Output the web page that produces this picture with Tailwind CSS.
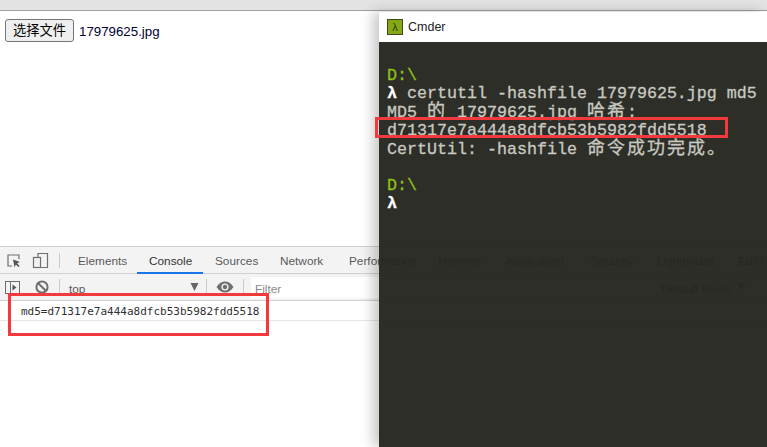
<!DOCTYPE html>
<html lang="zh">
<head>
    <meta charset="UTF-8">
    <title>md5</title>
    <script src="https://cdn.jsdelivr.net/npm/@tailwindcss/browser@4"></script>
</head>
<body class="bg-white">
<div class="relative w-[767px] h-[447px] overflow-hidden bg-white flex flex-col font-['Liberation_Sans','Noto_Sans_CJK_SC',sans-serif]">
    <!-- browser top edge -->
    <div class="h-[11px] shrink-0 bg-[#e3e3e3] border-b border-[#a0a0a0]"></div>

    <!-- page -->
    <div class="h-[235px] shrink-0 pl-[5px] pt-[8px] flex items-start">
        <button class="h-[23px] w-[69px] bg-[#efefef] border border-[#767676] rounded-[3px] text-[13.3px] text-black leading-none">选择文件</button>
        <span class="ml-[5px] mt-[4px] text-[13.3px] leading-[17px] text-[#000033]">17979625.jpg</span>
    </div>

    <!-- devtools -->
    <div class="flex-1 border-t border-[#d0d0d0] flex flex-col">
        <div class="h-[27px] shrink-0 bg-[#f3f3f3] border-b border-[#d0d0d0] flex items-center text-[11.8px] text-[#5a5a5a] whitespace-nowrap relative">
            <svg class="absolute left-[6px] top-[6px]" width="16" height="16" viewBox="0 0 16 16" fill="none"><path d="M6 13H2V2h11v4" stroke="#6e6e6e" stroke-width="1.2"/><path d="M7 6.5l7 2.6-3 1.2 2.6 2.6-1.2 1.2-2.6-2.6-1.2 3z" fill="#555"/></svg>
            <svg class="absolute left-[32px] top-[5px]" width="17" height="17" viewBox="0 0 17 17" fill="none"><path d="M6 5V1.5h9.5v14H9" stroke="#6e6e6e" stroke-width="1.2"/><rect x="1.5" y="5.5" width="7" height="10" stroke="#6e6e6e" stroke-width="1.2"/></svg>
            <div class="absolute left-[59px] top-[6px] h-[15px] w-px bg-[#ccc]"></div>
            <span class="absolute left-[78px] top-[6px]">Elements</span>
            <span class="absolute left-[149px] top-[6px] text-[#333]">Console</span>
            <div class="absolute left-[137px] bottom-[-1px] w-[66px] h-[2px] bg-[#1a73e8]"></div>
            <span class="absolute left-[215px] top-[6px]">Sources</span>
            <span class="absolute left-[280px] top-[6px]">Network</span>
            <span class="absolute left-[349px] top-[6px]">Performance</span>
            <span class="absolute left-[438px] top-[6px]">Memory</span>
            <span class="absolute left-[506px] top-[6px]">Application</span>
            <span class="absolute left-[591px] top-[6px]">Security</span>
            <span class="absolute left-[657px] top-[6px]">Lighthouse</span>
            <span class="absolute left-[738px] top-[6px]">EditThisCookie</span>
        </div>
        <div class="h-[27px] shrink-0 bg-[#f3f3f3] border-b border-[#d0d0d0] flex items-center text-[11.8px] text-[#5a5a5a] whitespace-nowrap relative">
            <svg class="absolute left-[5px] top-[6px]" width="15" height="15" viewBox="0 0 15 15" fill="none"><rect x="0.5" y="1.5" width="14" height="12" stroke="#6e6e6e"/><path d="M5.5 1.5v12" stroke="#6e6e6e"/><path d="M7.5 4.5l4 3-4 3z" fill="#555"/></svg>
            <svg class="absolute left-[35px] top-[6px]" width="14" height="14" viewBox="0 0 14 14" fill="none"><circle cx="7" cy="7" r="5.6" stroke="#6e6e6e" stroke-width="2"/><path d="M3 3l8 8" stroke="#6e6e6e" stroke-width="2"/></svg>
            <div class="absolute left-[59px] top-[5px] h-[16px] w-px bg-[#ccc]"></div>
            <span class="absolute left-[69px] top-[7px]">top</span>
            <svg class="absolute left-[190px] top-[9px]" width="9" height="8" viewBox="0 0 9 8"><path d="M0.5 0h8L4.500 8z" fill="#666"/></svg>
            <div class="absolute left-[206px] top-[5px] h-[16px] w-px bg-[#ccc]"></div>
            <svg class="absolute left-[216px] top-[7px]" width="18" height="12" viewBox="0 0 18 12"><path d="M0.500 6C3 2 6 0.500 9 0.500S15 2 17.500 6C15 10 12 11.500 9 11.500S3 10 0.500 6z" fill="#6e6e6e"/><circle cx="9" cy="6" r="3.600" fill="#f3f3f3"/><circle cx="9" cy="6" r="2.200" fill="#6e6e6e"/></svg>
            <div class="absolute left-[243px] top-[5px] h-[16px] w-px bg-[#ccc]"></div>
            <div class="absolute left-[251px] top-[3px] w-[200px] h-[21px] bg-white pl-[4px] pt-[4px] text-[#8a8a8a]">Filter</div>
            <span class="absolute left-[661px] top-[7px]">Default levels</span>
            <svg class="absolute left-[737px] top-[9px]" width="8" height="7" viewBox="0 0 8 7"><path d="M0 0h8L4 7z" fill="#666"/></svg>
        </div>
        <div class="h-[20px] shrink-0 border-b border-[#e6e6e6] pl-[21px] pt-[4px] font-['DejaVu_Sans_Mono',monospace] text-[11px] leading-[14px] text-[#303030]">md5=d71317e7a444a8dfcb53b5982fdd5518</div>
        <div class="pl-[7px] text-[11px] leading-[14px] text-[#367cf1] font-bold">›</div>
    </div>

    <!-- red box over console -->
    <div class="absolute left-[8px] top-[293px] w-[261px] h-[43px] border-[3px] border-[#f23a3c]"></div>

    <!-- cmder window -->
    <div class="absolute left-[379px] top-[12px] w-[388px] h-[435px] flex flex-col shadow-[-6px_0_12px_rgba(0,0,0,0.22)]">
        <div class="h-[30px] shrink-0 bg-white flex items-center pl-[8px]">
            <div class="w-[16px] h-[16px] bg-[#84a814] border border-[#3f4a16] flex items-center justify-center text-[11px] leading-none text-[#2d3a0a]">λ</div>
            <span class="ml-[5px] text-[12.500px] text-[#222] font-['Liberation_Sans',sans-serif]">Cmder</span>
        </div>
        <div class="flex-1 bg-[#24251e]/[0.96] pl-[8px] pt-[25px] font-['Liberation_Mono','Noto_Sans_CJK_SC',monospace] text-[16.670px] leading-[18px] text-[#c8c9c1] [-webkit-text-stroke:0.3px] whitespace-nowrap">
            <div class="text-[#8ec21a]">D:\</div>
            <div><span class="text-white font-bold">λ</span> certutil -hashfile 17979625.jpg md5</div>
            <div>MD5 <span class="text-[18px] tracking-[2px]">的</span> 17979625.jpg <span class="text-[18px] tracking-[2px]">哈希</span>:</div>
            <div>d71317e7a444a8dfcb53b5982fdd5518</div>
            <div>CertUtil: -hashfile <span class="text-[18px] tracking-[2px]">命令成功完成。</span></div>
            <div class="h-[18px]"></div>
            <div class="text-[#8ec21a]">D:\</div>
            <div class="text-white font-bold">λ</div>
        </div>
    </div>

    <!-- red box over terminal -->
    <div class="absolute left-[375px] top-[117px] w-[353px] h-[21px] border-[3px] border-[#f23a3c]"></div>
</div>
</body>
</html>
